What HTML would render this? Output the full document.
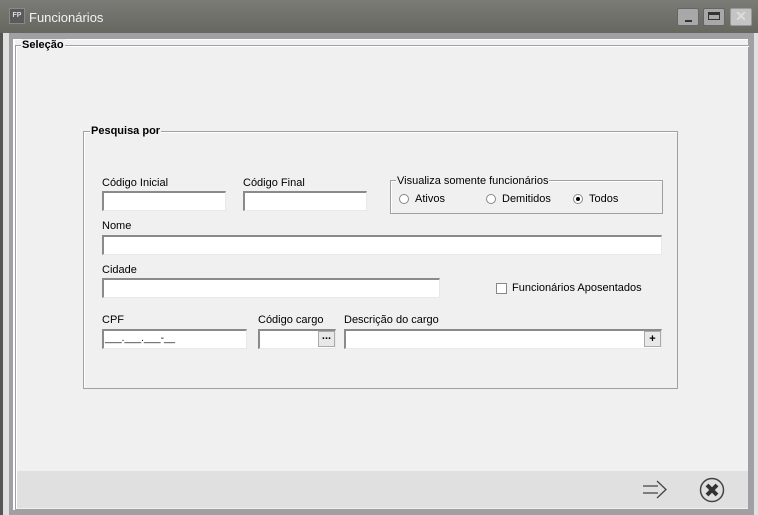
<!DOCTYPE html><html><head><style>
body{margin:0;width:758px;height:515px;overflow:hidden;background:#a09fa4;font-family:"Liberation Sans",sans-serif;font-size:11px;color:#000;position:relative}
.a{position:absolute}
.in{position:absolute;background:#fff;border-top:2px solid #8a8a8a;border-left:2px solid #8a8a8a;border-bottom:1px solid #e8e8e8;border-right:1px solid #e8e8e8;box-sizing:border-box}
.lb{position:absolute;font-size:11px}
.fs{position:absolute;border:1px solid #a0a0a0;box-shadow:1px 1px 0 #fff inset}
.rd{position:absolute;width:10px;height:10px;border-radius:50%;background:#fff;border:1px solid #888;box-sizing:border-box}
</style></head><body>
<div class="a" style="left:0;top:0;width:758px;height:33px;background:linear-gradient(#7a7b76,#66675f)"></div>
<div class="a" style="left:0;top:33px;width:3px;height:482px;background:#555"></div>
<div class="a" style="left:3px;top:33px;width:6px;height:482px;background:#e0e0e0"></div>
<div class="a" style="left:754px;top:33px;width:4px;height:482px;background:#e0e0e0"></div>
<div class="a" style="left:9px;top:8px;width:16px;height:16px;background:#5a5a5a;border:1px solid #888;box-sizing:border-box;color:#ddd;font-size:7px;font-weight:bold;text-align:center;line-height:14px">FP</div>
<div class="a" style="left:29px;top:10px;color:#f4f4f4;font-size:13px">Funcionários</div>
<div class="a" style="left:677px;top:8px;width:22px;height:18px;background:#a8a8a8;border:1px solid #666;border-radius:2px;box-sizing:border-box"><div class="a" style="left:7px;top:11px;width:7px;height:2px;background:#333"></div></div>
<div class="a" style="left:703px;top:8px;width:22px;height:18px;background:#a8a8a8;border:1px solid #666;border-radius:2px;box-sizing:border-box"><div class="a" style="left:4px;top:3px;width:12px;height:8px;border:1px solid #333;border-top-width:3px;box-sizing:border-box"></div></div>
<div class="a" style="left:730px;top:8px;width:22px;height:18px;background:#c4c4c4;border:1px solid #999;border-radius:2px;box-sizing:border-box;color:#ddd;font-weight:bold;font-size:14px;text-align:center;line-height:15px">✕</div>
<div class="a" style="left:13px;top:39px;width:735px;height:471px;background:#f0f0f0;border-left:2px solid #fff;border-top:1px solid #fff;box-sizing:border-box"></div>
<div class="a" style="left:15px;top:471px;width:733px;height:37px;background:#e0e0e0"></div>
<div class="fs" style="left:15px;top:45px;width:733px;height:463px;border-color:#a0a0a0"></div>
<div class="a" style="left:21px;top:39px;font-weight:bold;background:#f0f0f0;padding:0 1px">Seleção</div>
<div class="fs" style="left:83px;top:131px;width:593px;height:256px"></div>
<div class="a" style="left:90px;top:125px;font-weight:bold;background:#f0f0f0;padding:0 1px">Pesquisa por</div>
<div class="lb" style="left:102px;top:177px">Código Inicial</div>
<div class="in" style="left:102px;top:191px;width:124px;height:20px"></div>
<div class="lb" style="left:243px;top:177px">Código Final</div>
<div class="in" style="left:243px;top:191px;width:124px;height:20px"></div>
<div class="fs" style="left:390px;top:180px;width:271px;height:32px"></div>
<div class="a" style="left:396px;top:175px;background:#f0f0f0;padding:0 1px">Visualiza somente funcionários</div>
<div class="rd" style="left:399px;top:194px"></div><div class="lb" style="left:415px;top:193px">Ativos</div>
<div class="rd" style="left:486px;top:194px"></div><div class="lb" style="left:502px;top:193px">Demitidos</div>
<div class="rd" style="left:573px;top:194px"><div class="a" style="left:2px;top:2px;width:4px;height:4px;border-radius:50%;background:#000"></div></div><div class="lb" style="left:589px;top:193px">Todos</div>
<div class="lb" style="left:102px;top:220px">Nome</div>
<div class="in" style="left:102px;top:235px;width:560px;height:20px"></div>
<div class="lb" style="left:102px;top:264px">Cidade</div>
<div class="in" style="left:102px;top:278px;width:338px;height:20px"></div>
<div class="a" style="left:496px;top:283px;width:11px;height:11px;background:#fff;border:1px solid #888;box-sizing:border-box"></div>
<div class="lb" style="left:512px;top:282px">Funcionários Aposentados</div>
<div class="lb" style="left:102px;top:314px">CPF</div>
<div class="in" style="left:102px;top:329px;width:145px;height:20px;font-size:10px;line-height:15px;padding-left:1px">___.___.___-__</div>
<div class="lb" style="left:258px;top:314px">Código cargo</div>
<div class="in" style="left:258px;top:329px;width:78px;height:20px"><div class="a" style="right:0;top:0;width:17px;height:16px;background:#e8e8e8;border:1px solid #aaa;box-sizing:border-box;text-align:center;font-weight:bold;line-height:8px">...</div></div>
<div class="lb" style="left:344px;top:314px">Descrição do cargo</div>
<div class="in" style="left:344px;top:329px;width:318px;height:20px"><div class="a" style="right:0;top:0;width:17px;height:16px;background:#e8e8e8;border:1px solid #aaa;box-sizing:border-box;text-align:center;font-weight:bold;line-height:14px">+</div></div>
<svg class="a" style="left:640px;top:478px" width="30" height="24" viewBox="0 0 30 24"><path d="M3 8H18M3 15H18M17 3L26 11.5L17 20" fill="none" stroke="#444" stroke-width="1.3"/></svg>
<svg class="a" style="left:697px;top:476px" width="30" height="28" viewBox="0 0 30 28"><circle cx="15" cy="14" r="11.5" fill="none" stroke="#444" stroke-width="1.5"/><path d="M10 9L20 19M20 9L10 19" stroke="#333" stroke-width="4"/></svg>
</body></html>
